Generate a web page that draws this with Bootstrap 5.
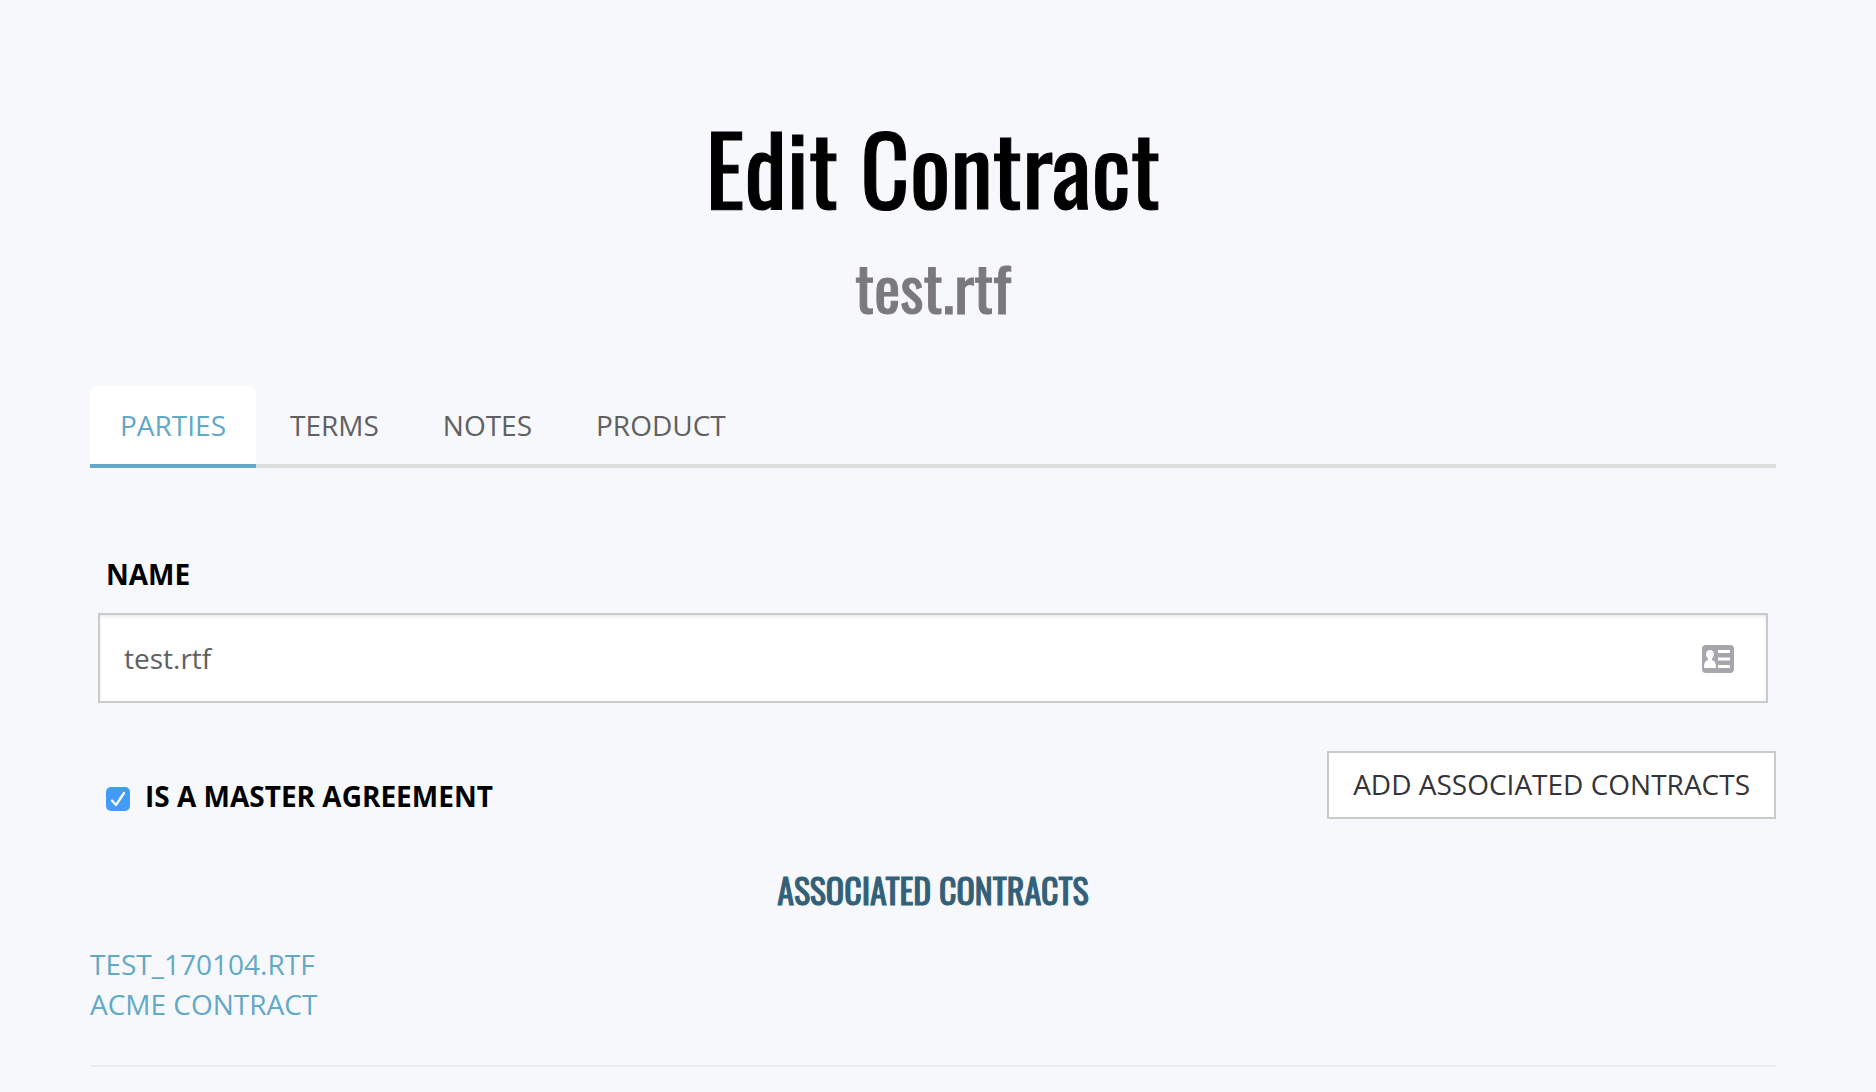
<!DOCTYPE html>
<html lang="en">
<head>
<meta charset="utf-8">
<meta name="viewport" content="width=device-width, initial-scale=1">
<title>Edit Contract</title>
<link href="https://cdn.jsdelivr.net/npm/bootstrap@5.3.0/dist/css/bootstrap.min.css" rel="stylesheet">
<style>
  body { background: #f7f8fc; color: #000; font-family: "Open Sans", "Noto Sans", sans-serif; font-size: 28px; line-height: 40px; }
  .page { padding: 102px 100px 24px 90px; }
  .display-face { font-family: Oswald, "Roboto Condensed", "Liberation Sans Narrow", sans-serif; font-weight: 400; -webkit-text-stroke: 1px currentColor; }
  .page-title { font-size: 96px; line-height: 128px; }
  .page-file { font-size: 62px; line-height: 80px; color: #7b797c; margin-top: 16px; }
  .contract-tabs { margin-top: 60px; border-bottom: 4px solid #dcdedd; gap: 4px; }
  .contract-tabs .nav-link { color: #606062; padding: 19px 30px; border: 0; border-bottom: 4px solid transparent; border-radius: 8px 8px 0 0; margin-bottom: -4px; }
  .contract-tabs .nav-link.active { color: #62a8c7; background: #fff; border-bottom-color: #62a8c7; }
  .name-field { margin: 86px 8px 0; }
  .name-field .form-label { margin: 0 8px 19px; }
  .name-field .form-control { height: 90px; padding: 0 80px 0 24px; border: 2px solid #c9cbca; border-radius: 0; font-size: 28px; color: #606062; box-shadow: inset 0 2px 3px rgba(0,0,0,.08); }
  .card-icon { right: 34px; top: 32px; width: 32px; height: 28px; }
  .master-row { margin-top: 48px; }
  .master-check { margin: 25px 0 0 16px; gap: 15px; }
  .master-check .form-check-input { width: 24px; height: 24px; margin: 5px 0 0; border: 0; border-radius: 5px; }
  .master-check .form-check-input:checked { background-color: #429bf9; background-image: url("data:image/svg+xml,%3csvg xmlns='http://www.w3.org/2000/svg' viewBox='0 0 24 24'%3e%3cpath d='M6 13.500l4 4.500L18 6' fill='none' stroke='white' stroke-width='2.300' stroke-linecap='round' stroke-linejoin='round'/%3e%3c/svg%3e"); }
  .add-button { background: #fff; border: 2px solid #c9cbca; border-radius: 0; padding: 11px 24px 13px; font-size: 28px; line-height: 40px; color: #333438; }
  .list-title { font-size: 34px; line-height: 48px; color: #316078; margin: 47px 0 30px; }
  .contract-links a { color: #62a8c7; }
  .page-rule { border-top: 2px solid #ebeced; opacity: 1; margin: 41px 0 0; }
</style>
</head>
<body>
<main class="page">
  <header class="text-center">
    <h1 class="display-face page-title mb-0">Edit Contract</h1>
    <h2 class="display-face page-file mb-0">test.rtf</h2>
  </header>
  <ul class="nav nav-tabs contract-tabs text-uppercase">
    <li class="nav-item"><a class="nav-link active" aria-current="page" href="#parties">Parties</a></li>
    <li class="nav-item"><a class="nav-link" href="#terms">Terms</a></li>
    <li class="nav-item"><a class="nav-link" href="#notes">Notes</a></li>
    <li class="nav-item"><a class="nav-link" href="#product">Product</a></li>
  </ul>
  <form>
    <div class="name-field">
      <label class="form-label d-block fw-bold" for="name">NAME</label>
      <div class="position-relative">
        <input class="form-control" id="name" type="text" value="test.rtf">
        <svg class="card-icon position-absolute" viewBox="0 0 32 28" aria-hidden="true">
          <rect width="32" height="28" rx="4" fill="#a5a7ad"/>
          <g fill="#fff">
            <ellipse cx="8" cy="9.500" rx="4" ry="4.500"/>
            <path d="M6 13h4v2c3 1 4 3 4 8H2c0-5 1-7 4-8z"/>
            <path d="M16 5h12v3H16zM16 12.500h12v3H16zM16 20h12v3H16z"/>
          </g>
        </svg>
      </div>
    </div>
    <div class="master-row d-flex justify-content-between align-items-start">
      <div class="master-check d-flex align-items-center">
        <input class="form-check-input flex-shrink-0" type="checkbox" id="master" checked>
        <label class="fw-bold" for="master">IS A MASTER AGREEMENT</label>
      </div>
      <button class="btn add-button" type="button">ADD ASSOCIATED CONTRACTS</button>
    </div>
  </form>
  <section>
    <h3 class="display-face list-title text-center">ASSOCIATED CONTRACTS</h3>
    <ul class="contract-links list-unstyled mb-0">
      <li><a class="text-decoration-none" href="#test-170104">TEST_170104.RTF</a></li>
      <li><a class="text-decoration-none" href="#acme">ACME CONTRACT</a></li>
    </ul>
  </section>
  <hr class="page-rule">
</main>
<script src="https://cdn.jsdelivr.net/npm/bootstrap@5.3.0/dist/js/bootstrap.bundle.min.js"></script>
</body>
</html>
